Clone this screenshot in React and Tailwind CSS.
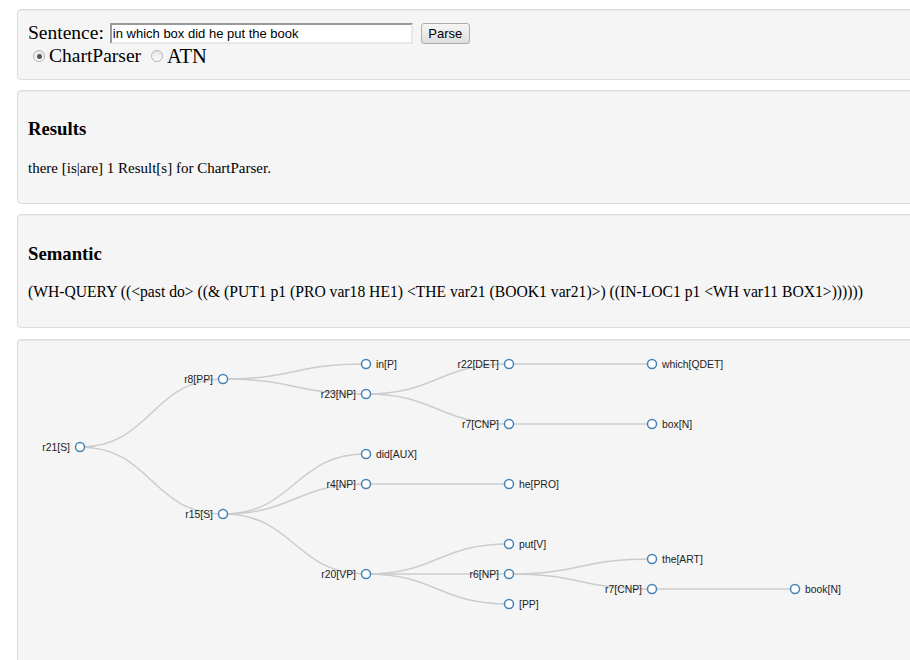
import { useState } from 'react';

const X0 = 18;
const Y0 = 340;

// node centres in page coordinates, shifted into the svg below
const NODES = {
  r21: { label: 'r21[S]', x: 80, y: 447 },
  r8: { label: 'r8[PP]', x: 223, y: 379 },
  r15: { label: 'r15[S]', x: 223, y: 514 },
  inP: { label: 'in[P]', x: 366, y: 364 },
  r23: { label: 'r23[NP]', x: 366, y: 394 },
  did: { label: 'did[AUX]', x: 366, y: 454 },
  r4: { label: 'r4[NP]', x: 366, y: 484 },
  r20: { label: 'r20[VP]', x: 366, y: 574 },
  r22: { label: 'r22[DET]', x: 509, y: 364 },
  r7a: { label: 'r7[CNP]', x: 509, y: 424 },
  he: { label: 'he[PRO]', x: 509, y: 484 },
  put: { label: 'put[V]', x: 509, y: 544 },
  r6: { label: 'r6[NP]', x: 509, y: 574 },
  pp: { label: '[PP]', x: 509, y: 604 },
  which: { label: 'which[QDET]', x: 652, y: 364 },
  box: { label: 'box[N]', x: 652, y: 424 },
  the: { label: 'the[ART]', x: 652, y: 559 },
  r7b: { label: 'r7[CNP]', x: 652, y: 589 },
  book: { label: 'book[N]', x: 795, y: 589 },
};

const LINKS = [
  ['r21', 'r8'], ['r21', 'r15'],
  ['r8', 'inP'], ['r8', 'r23'],
  ['r23', 'r22'], ['r23', 'r7a'],
  ['r22', 'which'], ['r7a', 'box'],
  ['r15', 'did'], ['r15', 'r4'], ['r15', 'r20'],
  ['r4', 'he'],
  ['r20', 'put'], ['r20', 'r6'], ['r20', 'pp'],
  ['r6', 'the'], ['r6', 'r7b'],
  ['r7b', 'book'],
];

const parents = new Set(LINKS.map(l => l[0]));

const diagonal = (s, t) => {
  const sx = s.x - X0, sy = s.y - Y0, tx = t.x - X0, ty = t.y - Y0;
  const mx = (sx + tx) / 2;
  return `M${sx},${sy}C${mx},${sy} ${mx},${ty} ${tx},${ty}`;
};

const Radio = ({ checked }) => (
  <span className="inline-flex h-[12px] w-[12px] items-center justify-center rounded-full border border-[#b5b5b5] bg-gradient-to-b from-[#e6e6e6] to-[#fdfdfd]">
    {checked && <span className="h-[5px] w-[5px] rounded-full bg-[#555]" />}
  </span>
);

const ParseTree = () => (
  <svg width="892" height="330" className="block">
    <g fill="none" stroke="#ccc" strokeWidth="1.5">
      {LINKS.map(([a, b]) => (
        <path key={a + b} d={diagonal(NODES[a], NODES[b])} />
      ))}
    </g>
    {Object.entries(NODES).map(([key, n]) => {
      const inner = parents.has(key);
      return (
        <g key={key} transform={`translate(${n.x - X0},${n.y - Y0})`}>
          <circle r="4.5" fill="#fff" stroke="steelblue" strokeWidth="1.5" />
          <text
            x={inner ? -10 : 10}
            dy=".35em"
            textAnchor={inner ? 'end' : 'start'}
            fontSize="10.4"
            fontFamily="'Liberation Sans', Arial, sans-serif"
            fill="#222"
          >
            {n.label}
          </text>
        </g>
      );
    })}
  </svg>
);

const Panel = ({ className = '', children }) => (
  <div className={`w-[920px] rounded-[4px] border border-[#dcdcdc] bg-[#f5f5f5] shadow-[inset_0_1px_1px_rgba(0,0,0,0.05)] ${className}`}>
    {children}
  </div>
);

export default function App() {
  const [sentence, setSentence] = useState('in which box did he put the book');

  return (
    <div className="h-[660px] w-[910px] overflow-hidden bg-white pl-[17px] pt-[9px] font-['Liberation_Serif','Times_New_Roman',serif] text-black">
      <Panel className="h-[71px] px-[10px] pt-[12px]">
        <div className="flex h-[22px] items-center">
          <span className="text-[19.5px] leading-none">Sentence:</span>
          <input
            value={sentence}
            onChange={e => setSentence(e.target.value)}
            className="ml-[6px] h-[21px] w-[303px] border-2 border-b-[#e8e8e8] border-l-[#9a9a9a] border-r-[#e8e8e8] border-t-[#9a9a9a] bg-white px-[1px] font-['Liberation_Sans',Arial,sans-serif] text-[13px] text-black outline-none"
          />
          <button className="ml-[8px] h-[21px] w-[49px] rounded-[3px] border border-[#adadad] bg-gradient-to-b from-[#f6f6f6] to-[#dedede] font-['Liberation_Sans',Arial,sans-serif] text-[13px] text-black">
            Parse
          </button>
        </div>
        <div className="flex h-[24px] items-center pl-[5px] text-[19.5px]">
          <Radio checked />
          <span className="ml-[4px]">ChartParser</span>
          <span className="ml-[10px]"><Radio /></span>
          <span className="ml-[4px] text-[20.5px]">ATN</span>
        </div>
      </Panel>

      <Panel className="mt-[10px] h-[114px] px-[10px] pt-[27px]">
        <h3 className="h-[22px] text-[18.72px] font-bold leading-[22px]">Results</h3>
        <p className="mt-[19px] text-[15px] leading-[18px]">there [is|are] 1 Result[s] for ChartParser.</p>
      </Panel>

      <Panel className="mt-[10px] h-[114px] px-[10px] pt-[28px]">
        <h3 className="h-[22px] text-[18.72px] font-bold leading-[22px]">Semantic</h3>
        <p className="mt-[18px] whitespace-nowrap text-[15.65px] leading-[18px]">
          {'(WH-QUERY ((<past do> ((& (PUT1 p1 (PRO var18 HE1) <THE var21 (BOOK1 var21)>) ((IN-LOC1 p1 <WH var11 BOX1>))))))'}
        </p>
      </Panel>

      <Panel className="mt-[11px] h-[360px]">
        <ParseTree />
      </Panel>
    </div>
  );
}
